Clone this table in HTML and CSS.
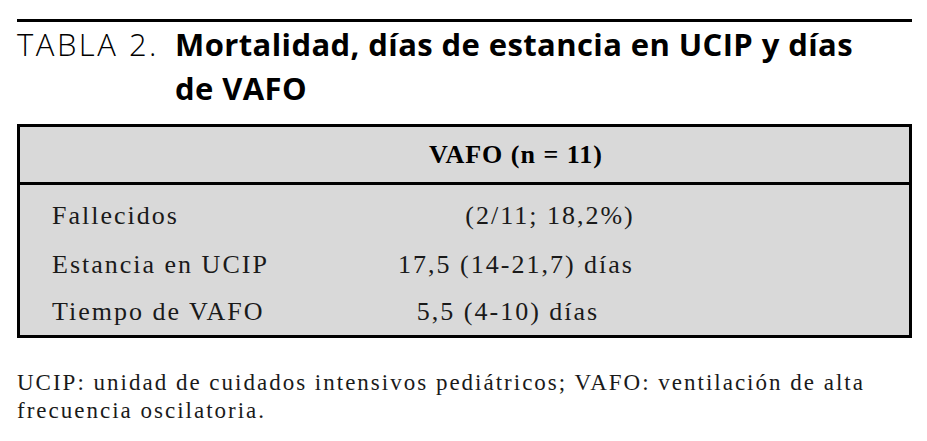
FILE: index.html
```html
<!DOCTYPE html>
<html lang="es">
<head>
<meta charset="UTF-8">
<meta name="viewport" content="width=device-width, initial-scale=1.0">
<title>Tabla 2</title>
<link rel="stylesheet" href="styles.css">
</head>
<body>
<div class="page">
  <div class="caption">
    <span class="caption-label">TABLA 2.</span>
    <h1 class="caption-title">Mortalidad, días de estancia en UCIP y días<br>de VAFO</h1>
  </div>

  <table class="data">
    <thead>
      <tr>
        <th class="col-label"></th>
        <th class="col-value">VAFO (n = 11)</th>
        <th class="col-rest"></th>
      </tr>
    </thead>
    <tbody>
      <tr>
        <td class="col-label">Fallecidos</td>
        <td class="col-value shift-right">(2/11; 18,2%)</td>
        <td></td>
      </tr>
      <tr>
        <td class="col-label">Estancia en UCIP</td>
        <td class="col-value">17,5 (14-21,7) días</td>
        <td></td>
      </tr>
      <tr>
        <td class="col-label">Tiempo de VAFO</td>
        <td class="col-value shift-left">5,5 (4-10) días</td>
        <td></td>
      </tr>
    </tbody>
  </table>

  <p class="note">UCIP: unidad de cuidados intensivos pediátricos; VAFO: ventilación de alta<br>frecuencia oscilatoria.</p>
</div>
</body>
</html>
```

FILE: styles.css
```css
body {
  margin: 0;
  background: #fff;
  color: #000;
}
.page {
  padding: 19px 15px 0 17px;
  width: 895px;
}
.caption {
  display: flex;
  border-top: 3px solid #000;
  font-family: "Open Sans", Lato, sans-serif;
  font-size: 31px;
  line-height: 44px;
}
.caption-label {
  flex: 0 0 158px;
  font-weight: 300;
  letter-spacing: 2.5px;
}
.caption-title {
  margin: 0;
  font-size: 31px;
  line-height: 44px;
  font-weight: 700;
  letter-spacing: 0.4px;
}
.data {
  margin-top: 14px;
  width: 895px;
  table-layout: fixed;
  border-collapse: collapse;
  border: 3px solid #000;
  background-color: #d9d9d9;
  font-family: "Liberation Serif", serif;
  color: #1a1a1a;
}
.data th {
  height: 55px;
  padding: 0;
  border-bottom: 3px solid #000;
  font-size: 26px;
  font-weight: bold;
  letter-spacing: 1px;
  color: #000;
  vertical-align: middle;
}
.data td {
  padding: 0;
  font-size: 26px;
  line-height: 49px;
  letter-spacing: 2px;
}
.data tbody tr:first-child td {
  padding-top: 6px;
}
.data tbody tr:last-child td {
  line-height: 46px;
}
.col-label {
  width: 330px;
  text-align: left;
}
.data td.col-label {
  padding-left: 32px;
}
.col-value {
  width: 332px;
  text-align: center;
}
.data td.shift-right {
  padding-left: 68px;
}
.data td.shift-left {
  padding-right: 16px;
}
.note {
  margin: 31px 0 0 0;
  font-family: "Liberation Serif", serif;
  font-size: 23px;
  line-height: 28px;
  letter-spacing: 2px;
  color: #1a1a1a;
  white-space: nowrap;
}
```
